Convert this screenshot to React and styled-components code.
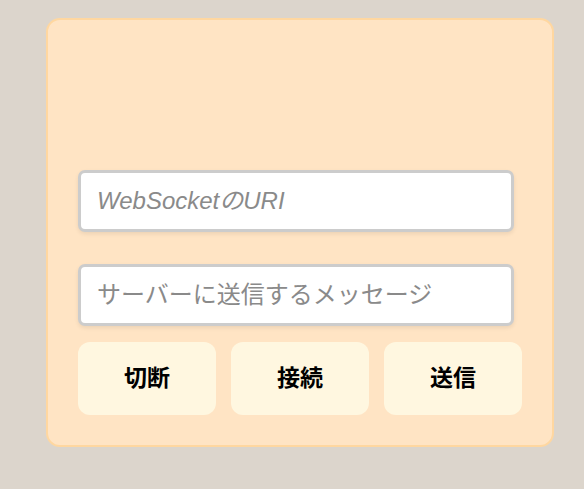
import React from "react";
import styled, { createGlobalStyle } from "styled-components";

const Global = createGlobalStyle`
  html, body { margin: 0; padding: 0; background: #dcd5cc; }
  body { font-family: "Liberation Sans", "Noto Sans CJK JP", sans-serif; }
`;

const Page = styled.div`
  padding: 18px 0 0 46px;
`;

const Card = styled.div`
  box-sizing: border-box;
  width: 508px;
  height: 429px;
  background: #ffe4c4;
  border: 2px solid #ffd7a0;
  border-radius: 14px;
  padding: 150px 30px 0 30px;
  display: flex;
  flex-direction: column;
`;

const Input = styled.input`
  box-sizing: border-box;
  width: 436px;
  height: 62px;
  border: 3px solid #cccccc;
  border-radius: 7px;
  background: #fff;
  padding: 0 16px;
  font-family: "Liberation Sans", "Noto Sans CJK JP", sans-serif;
  font-size: 24px;
  font-style: ${(p) => (p.$italic ? "italic" : "normal")};
  margin-bottom: ${(p) => p.$mb}px;
  box-shadow: 0 2px 4px rgba(0, 0, 0, 0.08);
  outline: none;
  &::placeholder { color: #8a8a8a; }
`;

const Buttons = styled.div`
  display: flex;
  gap: 15px;
`;

const Button = styled.button`
  width: 138px;
  height: 73px;
  border: none;
  border-radius: 12px;
  background: #fff7e0;
  font-family: "Noto Sans CJK JP", sans-serif;
  font-weight: 700;
  font-size: 23px;
  line-height: 1;
  padding: 0 0 4px;
  color: #000;
  cursor: pointer;
`;

export default function App() {
  return (
    <>
      <Global />
      <Page>
        <Card>
          <Input $italic $mb={32} placeholder="WebSocketのURI" />
          <Input $mb={16} placeholder="サーバーに送信するメッセージ" />
          <Buttons>
            <Button>切断</Button>
            <Button>接続</Button>
            <Button>送信</Button>
          </Buttons>
        </Card>
      </Page>
    </>
  );
}
